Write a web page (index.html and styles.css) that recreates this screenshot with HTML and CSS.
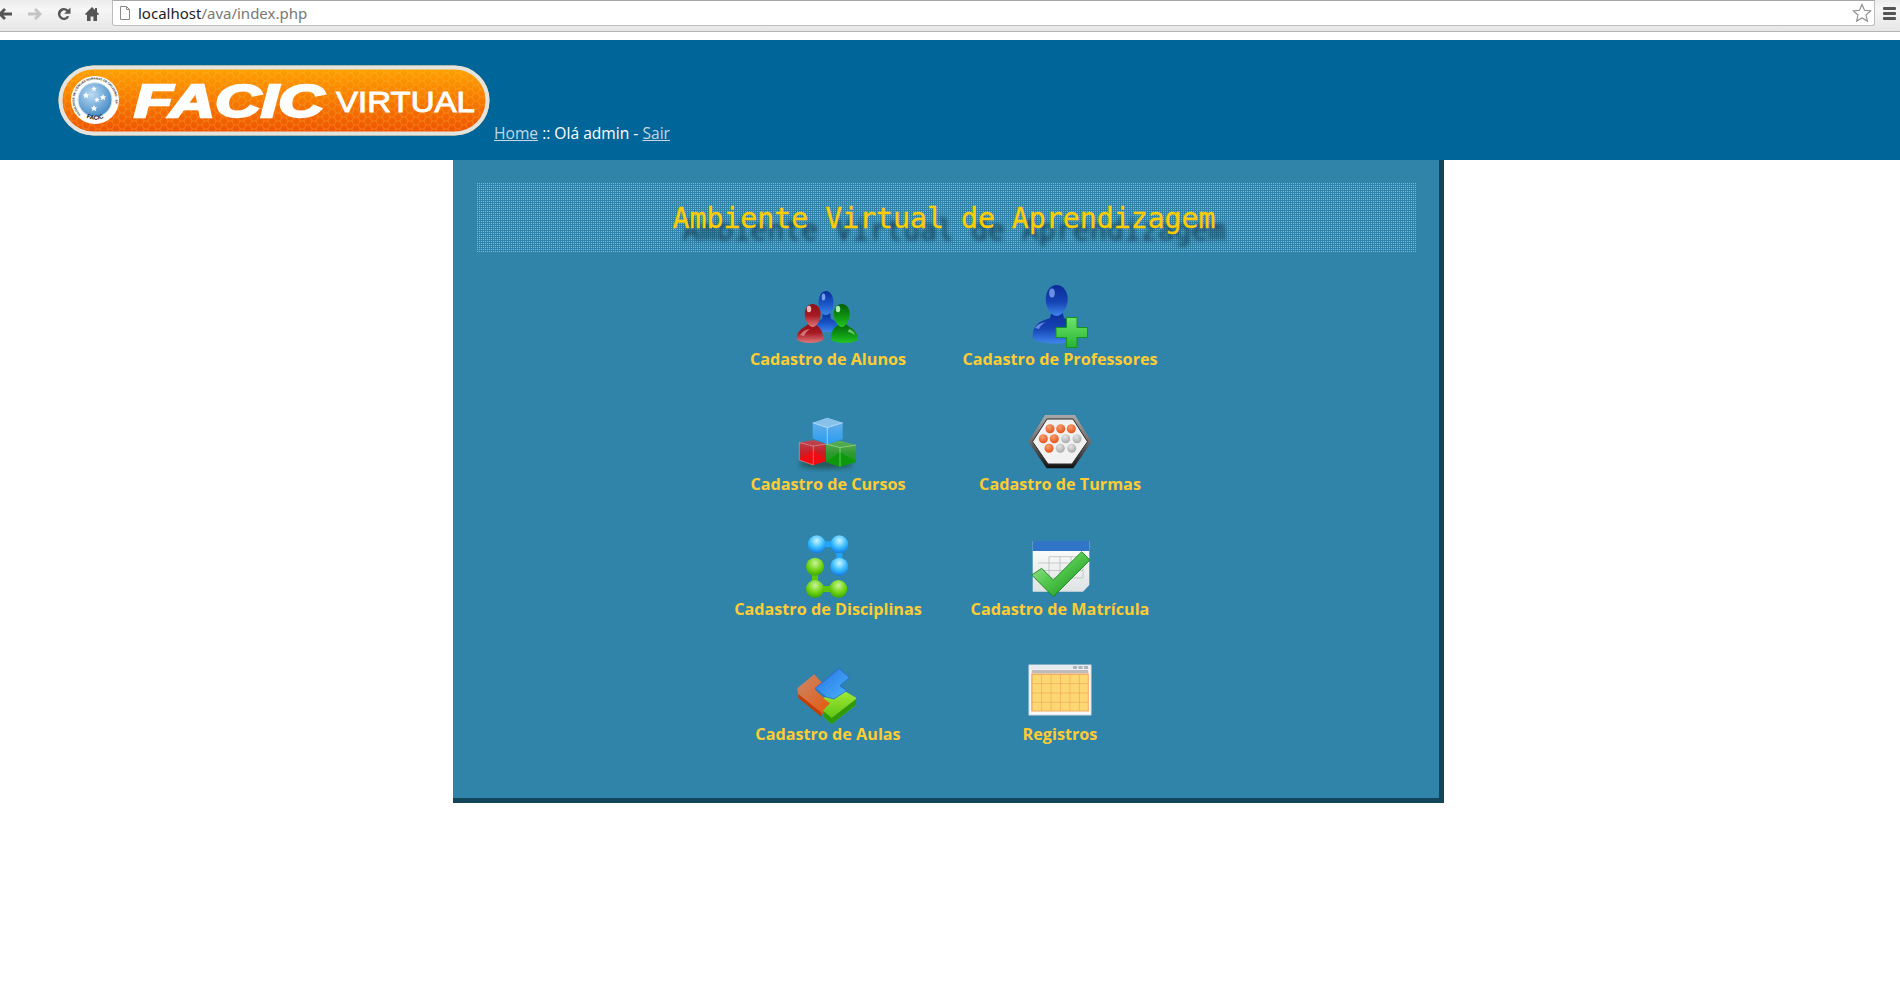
FILE: index.html
```html
<!DOCTYPE html>
<html lang="pt-BR">
<head>
<meta charset="utf-8">
<title>Ambiente Virtual de Aprendizagem</title>
<link rel="stylesheet" href="styles.css">
</head>
<body>
<div class="toolbar">
  <div class="tb-buttons">
    <svg class="tb-ico back" width="16" height="16" viewBox="0 0 16 16"><path d="M7 2 1 8l6 6 2-2-2.600-2.600H15V6.600H6.400L9 4z" fill="#555"/></svg>
    <svg class="tb-ico fwd" width="16" height="16" viewBox="0 0 16 16"><path d="M9 2l6 6-6 6-2-2 2.600-2.600H1V6.600h8.600L7 4z" fill="#c4c4c4"/></svg>
    <svg class="tb-ico rel" width="16" height="16" viewBox="0 0 16 16"><path d="M13.300 10.500A6 6 0 1 1 12.200 3.700L14.500 1.500V7.800H8.200l2.200-2.300A3.500 3.500 0 1 0 11 10z" fill="#555"/></svg>
    <svg class="tb-ico home" width="16" height="16" viewBox="0 0 16 16"><path d="M8 1 .8 8.200 2.300 9 3 8.400V15h3.600v-4.500h2.800V15H13V8.400l.7.600 1.500-.8L13 6V2h-2v2z" fill="#555"/></svg>
  </div>
  <div class="urlbar">
    <svg class="doc" width="12" height="14" viewBox="0 0 12 14"><path d="M1.500.5h6l3 3v10h-9zM7.500.5v3h3" fill="#fff" stroke="#8a8a8a"/></svg>
    <span class="url"><span class="host">localhost</span>/ava/index.php</span>
    <svg class="star" width="20" height="20" viewBox="0 0 20 20"><path d="M10 1.500l2.500 5.800 6.200.6-4.700 4.100 1.400 6.100L10 15l-5.400 3.100L6 12 1.300 7.900l6.200-.6z" fill="#fff" stroke="#8c8c8c" stroke-width="1.100"/></svg>
  </div>
  <div class="menu"><i></i><i></i><i></i></div>
</div>

<header class="site-head">
  <svg class="logo" width="432" height="71" viewBox="0 0 432 71">
    <defs>
      <linearGradient id="lg" x1="0" y1="0" x2="0" y2="1"><stop offset="0" stop-color="#ffa300"/><stop offset="1" stop-color="#ee5200"/></linearGradient>
      <pattern id="hex" width="12" height="8" patternUnits="userSpaceOnUse"><path d="M0 4 2 0h4l2 4-2 4H2zM8 4h4" fill="none" stroke="#ffc45e" stroke-opacity=".4" stroke-width=".7"/></pattern>
      <radialGradient id="gl" cx=".4" cy=".35" r=".7"><stop offset="0" stop-color="#bcdcf2"/><stop offset="1" stop-color="#3f86c4"/></radialGradient>
      <path id="ringTop" d="M22.500 49.500A20.500 20.500 0 1 1 51.500 49.500"/>
      <path id="ringBot" d="M17 41A21.500 21.500 0 0 0 57 41"/>
    </defs>
    <rect x=".5" y=".5" width="431" height="70" rx="35" fill="#f4b04a"/>
    <rect x="2.500" y="2.500" width="427" height="66" rx="33" fill="url(#lg)" stroke="#e3e3df" stroke-width="4"/>
    <rect x="4.500" y="4.500" width="423" height="62" rx="31" fill="url(#hex)"/>
    <circle cx="37" cy="35" r="24" fill="#fff"/>
    <circle cx="37" cy="34.700" r="17" fill="url(#gl)" stroke="#d8e6ef"/>
    <text class="seal-t"><textPath href="#ringTop">FACULDADE DE CIÊNCIAS HUMANAS DE CRUZEIRO - SP</textPath></text>
    <text class="seal-b"><textPath href="#ringBot" startOffset="50%" text-anchor="middle">FACIC</textPath></text>
    <g fill="#fff">
      <path d="M28 27l1 2.200 2.300.2-1.800 1.500.6 2.300-2.100-1.200-2.100 1.200.6-2.300-1.800-1.500 2.300-.2z"/>
      <path d="M36 21l.8 1.800 1.900.2-1.400 1.300.4 1.900-1.700-1-1.700 1 .4-1.900-1.400-1.300 1.900-.2z"/>
      <path d="M45 29l1 2.200 2.300.2-1.800 1.500.6 2.300-2.100-1.200-2.100 1.200.6-2.300-1.800-1.500 2.300-.2z"/>
      <path d="M39 32l.8 1.800 1.900.2-1.400 1.300.4 1.900-1.700-1-1.700 1 .4-1.900-1.400-1.300 1.900-.2z"/>
      <path d="M36 40l1 2.200 2.300.2-1.800 1.500.6 2.300-2.100-1.200-2.100 1.200.6-2.300-1.800-1.500 2.300-.2z"/>
    </g>
    <text class="facic" x="76" y="52" textLength="190" lengthAdjust="spacingAndGlyphs">FACIC</text>
    <text class="virtual" x="278" y="46.500" textLength="139" lengthAdjust="spacingAndGlyphs">VIRTUAL</text>
  </svg>
  <nav class="crumbs"><a href="#">Home</a> :: Olá admin - <a href="#">Sair</a></nav>
</header>

<main class="panel">
  <h1 class="banner"><span class="banner-text">Ambiente Virtual de Aprendizagem</span></h1>
  <div class="grid">

    <a class="item" href="#">
      <svg width="64" height="64" viewBox="0 0 64 64">
        <defs>
          <linearGradient id="pb" x1="0" y1="0" x2="0" y2="1"><stop offset="0" stop-color="#0a2f9c"/><stop offset=".55" stop-color="#1b57c8"/><stop offset="1" stop-color="#3b86e8"/></linearGradient>
          <linearGradient id="pr" x1="0" y1="0" x2="0" y2="1"><stop offset="0" stop-color="#8e0f18"/><stop offset=".5" stop-color="#a81a24"/><stop offset="1" stop-color="#e0787c"/></linearGradient>
          <linearGradient id="pg" x1="0" y1="0" x2="0" y2="1"><stop offset="0" stop-color="#055f06"/><stop offset=".6" stop-color="#0f9a14"/><stop offset="1" stop-color="#24c524"/></linearGradient>
        </defs>
        <path d="M18 45c-2-6 3-9 8-11l1-6h7l1 6c5 2 9 5 8 11-6 3-19 3-25 0z" fill="url(#pb)"/>
        <path d="M22.500 18c0-7 3-12 7.500-12s7.500 5 7.500 12c0 6-3 12-7.500 12s-7.500-6-7.500-12z" fill="url(#pb)"/>
        <ellipse cx="27.500" cy="12" rx="1.800" ry="3.500" fill="#9cc0ff" opacity=".75"/>
        <path d="M1 55c-1.500-6 3-11 9-14l3-3h6l2 3c4 2 6 6 6 14-6 4-20 4-26 0z" fill="url(#pr)"/>
        <path d="M8.700 29c0-6 3.500-10 8-10s8 4 8 10c0 6-4 13-8 13s-8-7-8-13z" fill="url(#pr)"/>
        <ellipse cx="13" cy="24" rx="2.200" ry="3.200" fill="#ffd0d0" opacity=".85"/>
        <path d="M4 50c3-4 6-6 10-6-3 2-5 4-6 7z" fill="#f0b0b0" opacity=".6"/>
        <path d="M35 55c0-8 2-12 6-14l2-3h6l3 3c6 3 10.500 8 10 14-6 4-21 4-27 0z" fill="url(#pg)"/>
        <path d="M37.700 29c0-6 3.500-10 8-10s8 4 8 10c0 6-4 13-8 13s-8-7-8-13z" fill="url(#pg)"/>
        <ellipse cx="42" cy="24" rx="2.200" ry="3.200" fill="#c8ffc8" opacity=".85"/>
        <path d="M53 44c3 1 5 3 6 6-3-2-5-3-7-3z" fill="#b0f0b0" opacity=".6"/>
      </svg>
      <span class="lbl">Cadastro de Alunos</span>
    </a>

    <a class="item" href="#">
      <svg width="64" height="64" viewBox="0 0 64 64">
        <defs>
          <linearGradient id="qb" x1="0" y1="0" x2="0" y2="1"><stop offset="0" stop-color="#0b2c96"/><stop offset=".55" stop-color="#1543b5"/><stop offset="1" stop-color="#3f86ec"/></linearGradient>
          <linearGradient id="qg" x1="0" y1="0" x2="0" y2="1"><stop offset="0" stop-color="#6fe36f"/><stop offset="1" stop-color="#25b52d"/></linearGradient>
        </defs>
        <path d="M5 54c-1.500-7 2-15 9-18l8-3 2-8h10l2 8 7 3c5 2 7 8 7 18-9 6-36 6-45 0z" fill="url(#qb)"/>
        <path d="M17.700 14c0-8 5-14 11-14s11 6 11 14c0 8-5 17-11 17s-11-9-11-17z" fill="url(#qb)"/>
        <ellipse cx="24" cy="8" rx="2.800" ry="4.500" fill="#7fa6f5" opacity=".8"/>
        <path d="M7 43c3-4 6-5 11-6-4 2-6 4-7 7z" fill="#9cc0ff" opacity=".6"/>
        <path d="M38.500 32.500h10.500v10h10.500v10H49v10H38.500v-10H28v-10h10.500z" fill="url(#qg)" stroke="#149320"/>
      </svg>
      <span class="lbl">Cadastro de Professores</span>
    </a>

    <a class="item" href="#">
      <svg width="64" height="64" viewBox="0 0 64 64">
        <defs>
          <filter id="glow" x="-30%" y="-30%" width="160%" height="160%"><feGaussianBlur stdDeviation="2.500"/></filter>
          <linearGradient id="cb" x1="0" y1="0" x2="0" y2="1"><stop offset="0" stop-color="#6db2e6"/><stop offset="1" stop-color="#2a9cf2"/></linearGradient>
          <linearGradient id="cr" x1="0" y1="0" x2="0" y2="1"><stop offset="0" stop-color="#b84a54"/><stop offset=".5" stop-color="#c81f28"/><stop offset="1" stop-color="#e80c12"/></linearGradient>
          <linearGradient id="cg" x1="0" y1="0" x2="0" y2="1"><stop offset="0" stop-color="#5eae5a"/><stop offset=".5" stop-color="#2d9a2d"/><stop offset="1" stop-color="#109a10"/></linearGradient>
        </defs>
        <ellipse cx="30" cy="54" rx="27" ry="5" fill="#24483a" filter="url(#glow)" opacity=".7"/>
        <path d="M3.300 32.500 17.300 30 30 34v17l-12.700 4-14-5z" fill="url(#cr)"/>
        <path d="M3.300 50 17.300 40 30 51 17.300 55z" fill="#f00c10"/>
        <path d="M17.300 36v19L3.300 50V32.500zM17.300 36 30 34" fill="none" stroke="#f2b5b5" stroke-width=".5"/>
        <path d="M30 34l14-3.300L60 35v17l-16 4.700L30 52z" fill="url(#cg)"/>
        <path d="M30 52 44 42 60 52 44 56.700z" fill="#0c9a0c"/>
        <path d="M44 37.500v19M30 34l14 3.500L60 35" fill="none" stroke="#cfeecb" stroke-width=".5"/>
        <path d="M31.300 7.700 46.700 12.700v16.600l-15.400 5-14.600-6V12.700z" fill="url(#cb)"/>
        <path d="M16.700 12.700 31.300 7.700 46.700 12.700 31.300 17.700z" fill="#86c2ea"/>
        <path d="M16.700 12.700 31.300 17.700 46.700 12.700M31.300 17.700V34.300" fill="none" stroke="#d6eeff" stroke-width=".6"/>
      </svg>
      <span class="lbl">Cadastro de Cursos</span>
    </a>

    <a class="item" href="#">
      <svg width="64" height="64" viewBox="0 0 64 64">
        <defs>
          <linearGradient id="hx" x1="0" y1="0" x2="0" y2="1"><stop offset="0" stop-color="#a8a8a8"/><stop offset=".5" stop-color="#6e6e6e"/><stop offset="1" stop-color="#111"/></linearGradient>
          <radialGradient id="do" cx=".4" cy=".3" r=".8"><stop offset="0" stop-color="#f9a06e"/><stop offset="1" stop-color="#e2480f"/></radialGradient>
          <radialGradient id="dg" cx=".4" cy=".3" r=".8"><stop offset="0" stop-color="#e4e4e4"/><stop offset="1" stop-color="#a2a2a2"/></radialGradient>
        </defs>
        <path d="M.3 31.700 17 5h30l16.700 26.700-18.400 26.600H18.700z" fill="url(#hx)"/>
        <path d="M4.500 31.700 19 9h26l14.500 22.700L44 54H20z" fill="#f1f1f1" stroke="#2a2a2a"/>
        <g fill="url(#do)">
          <circle cx="22" cy="18.700" r="4.500"/><circle cx="32.700" cy="18.700" r="4.500"/><circle cx="43.300" cy="18.700" r="4.500"/>
          <circle cx="15.300" cy="28.700" r="4.500"/><circle cx="26.300" cy="28.700" r="4.500"/><circle cx="21" cy="38.300" r="4.500"/>
        </g>
        <g fill="url(#dg)">
          <circle cx="37.700" cy="28.700" r="4.500"/><circle cx="49" cy="28.700" r="4.500"/><circle cx="32.300" cy="38.300" r="4.500"/><circle cx="43.700" cy="38.300" r="4.500"/>
        </g>
      </svg>
      <span class="lbl">Cadastro de Turmas</span>
    </a>

    <a class="item" href="#">
      <svg width="64" height="64" viewBox="0 0 64 64">
        <defs>
          <radialGradient id="mb" cx=".5" cy=".3" r=".75"><stop offset="0" stop-color="#c9f6ff"/><stop offset=".55" stop-color="#34b9ff"/><stop offset="1" stop-color="#0f6ee0"/></radialGradient>
          <radialGradient id="mg" cx=".5" cy=".3" r=".75"><stop offset="0" stop-color="#c9f59a"/><stop offset=".55" stop-color="#6fd312"/><stop offset="1" stop-color="#329c08"/></radialGradient>
        </defs>
        <path d="M20.700 9.300H43.300V31.700" fill="none" stroke="#22a4f8" stroke-width="6"/>
        <path d="M19 31.700V54H42.300" fill="none" stroke="#5dc510" stroke-width="6"/>
        <g fill="url(#mb)"><circle cx="20.700" cy="9.300" r="9"/><circle cx="43.300" cy="9.300" r="9"/><circle cx="43.300" cy="31.700" r="9"/></g>
        <g fill="url(#mg)"><circle cx="19" cy="31.700" r="9"/><circle cx="19" cy="54" r="9"/><circle cx="42.300" cy="54" r="9"/></g>
      </svg>
      <span class="lbl">Cadastro de Disciplinas</span>
    </a>

    <a class="item" href="#">
      <svg width="64" height="64" viewBox="0 0 64 64">
        <defs>
          <linearGradient id="ch" x1="0" y1="0" x2="1" y2="1"><stop offset="0" stop-color="#b4ecae"/><stop offset=".45" stop-color="#55c950"/><stop offset="1" stop-color="#0a860e"/></linearGradient>
          <linearGradient id="pp" x1="0" y1="0" x2="0" y2="1"><stop offset="0" stop-color="#fff"/><stop offset="1" stop-color="#dfe3e3"/></linearGradient>
        </defs>
        <path d="M4.700 6H61.300V50L55 56.700H4.700z" fill="url(#pp)"/>
        <path d="M4.700 6H61.300V16H4.700z" fill="#3176c6"/>
        <path d="M10 28H55M10 35.500H55M10 43H55M21 21.700V43M32 21.700V43M43 21.700V43M21 21.700H55V43" fill="none" stroke="#b9bcbc" stroke-width=".8"/>
        <path d="M3.700 40 13.700 33.300 25.300 45 53.700 16.700 62 25 25.300 61.700z" fill="url(#ch)" stroke="#0d7a10" stroke-width=".8"/>
      </svg>
      <span class="lbl">Cadastro de Matrícula</span>
    </a>

    <a class="item" href="#">
      <svg width="64" height="64" viewBox="0 0 64 64">
        <defs>
          <linearGradient id="tr" x1="0" y1="0" x2="1" y2="1"><stop offset="0" stop-color="#c8886a"/><stop offset="1" stop-color="#e9560a"/></linearGradient>
          <linearGradient id="tb" x1="0" y1="0" x2="1" y2="1"><stop offset="0" stop-color="#2a70e0"/><stop offset="1" stop-color="#45b4ff"/></linearGradient>
          <linearGradient id="tg" x1="0" y1="0" x2="0" y2="1"><stop offset="0" stop-color="#a8ee3a"/><stop offset="1" stop-color="#52bc0c"/></linearGradient>
        </defs>
        <path d="M1.300 28.300 18.300 14.300 27.300 24.300 19 30 34 43.300 25.700 55 2.300 35z" fill="url(#tr)"/>
        <path d="M2.300 34 25.700 53 25.700 57 2.300 38z" fill="#c43d02"/>
        <path d="M27.300 38.300 44 28.300 60 37.700 60 45 35.700 64 27.300 56.700 27.300 50 34 43.300z" fill="url(#tg)"/>
        <path d="M35.700 58 60 39v6L35.700 64 27.300 56.700V51z" fill="#2f9a07"/>
        <path d="M19 28.300 43.300 8.300 53.300 17.700 44 25.700 50.700 30.700 38 39 30 37z" fill="url(#tb)" stroke="#1f58c0" stroke-width=".6"/>
      </svg>
      <span class="lbl">Cadastro de Aulas</span>
    </a>

    <a class="item" href="#">
      <svg width="64" height="64" viewBox="0 0 64 64">
        <defs>
          <pattern id="cells" x="3.700" y="14" width="9.430" height="9.250" patternUnits="userSpaceOnUse"><rect width="9.430" height="9.250" fill="#fdd872"/><path d="M0 0H9.430M0 0V9.250" stroke="#f2a95c" stroke-width="1.400"/></pattern>
        </defs>
        <rect x="1" y="5" width="62" height="50" fill="#fafafa" stroke="#d6dadf"/>
        <rect x="2.500" y="6" width="59" height="3.500" fill="#e6e9ed"/>
        <rect x="45" y="6" width="4" height="3" fill="#aeb4ba"/><rect x="50.500" y="6" width="4" height="3" fill="#aeb4ba"/><rect x="56" y="6" width="4" height="3" fill="#aeb4ba"/>
        <rect x="3.700" y="10" width="56.600" height="3.300" fill="#bcbcbc"/>
        <rect x="3.700" y="14" width="56.600" height="37" fill="url(#cells)" stroke="#f2a95c"/>
      </svg>
      <span class="lbl">Registros</span>
    </a>

  </div>
</main>
</body>
</html>
```

FILE: styles.css
```css
* { box-sizing: content-box; }
html, body { margin: 0; padding: 0; background: #fff; }
body { font-family: "Open Sans", "Noto Sans", sans-serif; }

.toolbar {
  height: 31px;
  display: flex;
  align-items: flex-start;
  background: linear-gradient(#ececec, #f6f6f6 30%, #e6e6e6);
  border-bottom: 1px solid #b4b4b4;
  margin-bottom: 8px;
}
.tb-buttons { display: flex; width: 112px; flex: none; padding-top: 6px; }
.tb-ico { display: block; flex: none; }
.back { margin-left: -3px; }
.fwd { margin-left: 14px; }
.rel { margin-left: 13px; }
.home { margin-left: 12px; }
.urlbar {
  flex: 1;
  height: 24px;
  background: #fff;
  border: 1px solid #bdbdbd;
  border-top-color: #a8a8a8;
  border-radius: 0 0 3px 3px;
  display: flex;
  align-items: center;
  padding-left: 6px;
}
.doc { flex: none; }
.url { margin-left: 7px; font: 15px/24px "Noto Sans", sans-serif; color: #777; flex: 1; }
.host { color: #222; }
.star { flex: none; margin-right: 2px; }
.menu { width: 17px; flex: none; display: flex; flex-direction: column; gap: 2px; padding: 7px 0 0 8px; }
.menu i { display: block; width: 13px; height: 3px; background: #555; border-radius: 1px; }

.site-head {
  height: 95px;
  padding: 25px 0 0 58px;
  background: #006699;
  display: flex;
  align-items: flex-start;
}
.logo { display: block; flex: none; }
.facic { font: italic 700 47px "Liberation Sans", sans-serif; fill: #fff; stroke: #fff; stroke-width: 2.400px; }
.virtual { font: 400 30px "Liberation Sans", sans-serif; fill: #fff; stroke: #fff; stroke-width: .9px; }
.seal-t { font: 700 3px "Liberation Sans", sans-serif; fill: #222; }
.seal-b { font: 700 6px "Liberation Sans", sans-serif; fill: #111; }
.crumbs {
  margin: 57px 0 0 4px;
  font: 15.600px/22px "Open Sans", sans-serif;
  color: #fff;
  white-space: nowrap;
}
.crumbs a { color: #c5d6e3; }

.panel {
  width: 986px;
  margin-left: 453px;
  padding-top: 23px;
  padding-bottom: 13px;
  background: #3084a9;
  border-right: 5px solid #114559;
  border-bottom: 5px solid #114559;
}
.banner {
  width: 936px;
  height: 69px;
  padding-right: 4px;
  margin: 0 0 33px 23px;
  font: 400 28.200px/71px "DejaVu Sans Mono", monospace;
  text-align: center;
  color: #ffcc00;
  background-image: conic-gradient(rgba(255, 255, 255, .4) 25%, transparent 0);
  background-size: 2px 2px;
}
.banner-text {
  -webkit-text-stroke: .3px #ffcc00;
  text-shadow: 10px 12px 4px #143a52;
}
.grid {
  display: grid;
  grid-template-columns: 232px 232px;
  grid-auto-rows: 125px;
  justify-content: center;
  padding-right: 4px;
}
.item {
  display: flex;
  flex-direction: column;
  align-items: center;
  text-decoration: none;
}
.item svg { display: block; flex: none; }
.lbl {
  font: 700 16.200px/20px "Open Sans", sans-serif;
  color: #ffcc33;
  white-space: nowrap;
}
```
